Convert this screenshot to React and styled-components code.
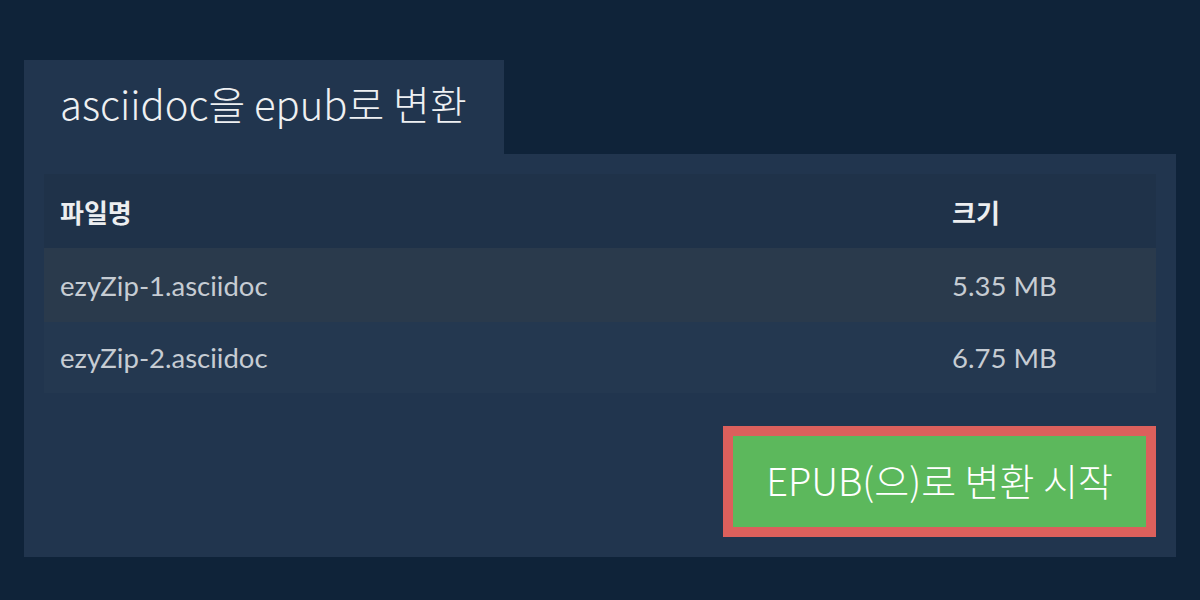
import React from "react";
import styled, { createGlobalStyle } from "styled-components";

const Global = createGlobalStyle`
  html, body { margin: 0; padding: 0; background: #0f2339; }
  body { font-family: "Noto Sans CJK KR", "Noto Sans", sans-serif; }
  * { box-sizing: border-box; }
`;

const lightStack = `"Noto Sans CJK KR Light", "Noto Sans CJK KR DemiLight", "Noto Sans CJK KR", sans-serif`;

const Page = styled.div`
  width: 1200px;
  height: 600px;
  padding: 60px 24px 0 24px;
  display: flex;
  flex-direction: column;
  align-items: flex-start;
`;

const Tab = styled.div`
  width: 480px;
  height: 94px;
  padding: 0 36px;
  display: flex;
  align-items: center;
  background: #21354e;
`;

const Title = styled.h1`
  margin: 0;
  font-family: ${lightStack};
  font-weight: 300;
  font-size: 40px;
  color: #eef0f2;
  line-height: 1;
  padding-bottom: 8px;
  white-space: nowrap;
`;

const Panel = styled.div`
  width: 1152px;
  background: #21354e;
  padding: 20px;
  display: flex;
  flex-direction: column;
  align-items: flex-end;
`;

const Table = styled.table`
  width: 1112px;
  border-collapse: collapse;
  table-layout: fixed;
`;

const HeadRow = styled.tr`
  height: 74px;
  background: #1f3249;
`;

const Th = styled.th`
  text-align: left;
  padding: 0 16px;
  font-family: "Noto Sans CJK KR", sans-serif;
  font-weight: 700;
  font-size: 26px;
  color: #eceef0;
  width: ${(p) => p.$w || "auto"};
`;

const Row = styled.tr`
  height: ${(p) => p.$h}px;
  background: ${(p) => p.$bg};
`;

const Td = styled.td`
  padding: 0 16px;
  font-family: Lato, "Noto Sans", sans-serif;
  font-size: 27.5px;
  color: #c6ccd3;
`;

const Button = styled.button`
  margin-top: 33px;
  width: 433px;
  height: 111px;
  background: #5cb85c;
  border: 10px solid #dc605c;
  color: #ffffff;
  font-family: ${lightStack};
  font-weight: 300;
  font-size: 38px;
  padding: 0 0 4px 0;
  cursor: pointer;
`;

export default function App() {
  return (
    <>
      <Global />
      <Page>
        <Tab>
          <Title>asciidoc을 epub로 변환</Title>
        </Tab>
        <Panel>
          <Table>
            <thead>
              <HeadRow>
                <Th $w="892px">파일명</Th>
                <Th>크기</Th>
              </HeadRow>
            </thead>
            <tbody>
              <Row $h={74} $bg="#2a3a4c">
                <Td>ezyZip-1.asciidoc</Td>
                <Td>5.35 MB</Td>
              </Row>
              <Row $h={71} $bg="#243850">
                <Td>ezyZip-2.asciidoc</Td>
                <Td>6.75 MB</Td>
              </Row>
            </tbody>
          </Table>
          <Button>EPUB(으)로 변환 시작</Button>
        </Panel>
      </Page>
    </>
  );
}
